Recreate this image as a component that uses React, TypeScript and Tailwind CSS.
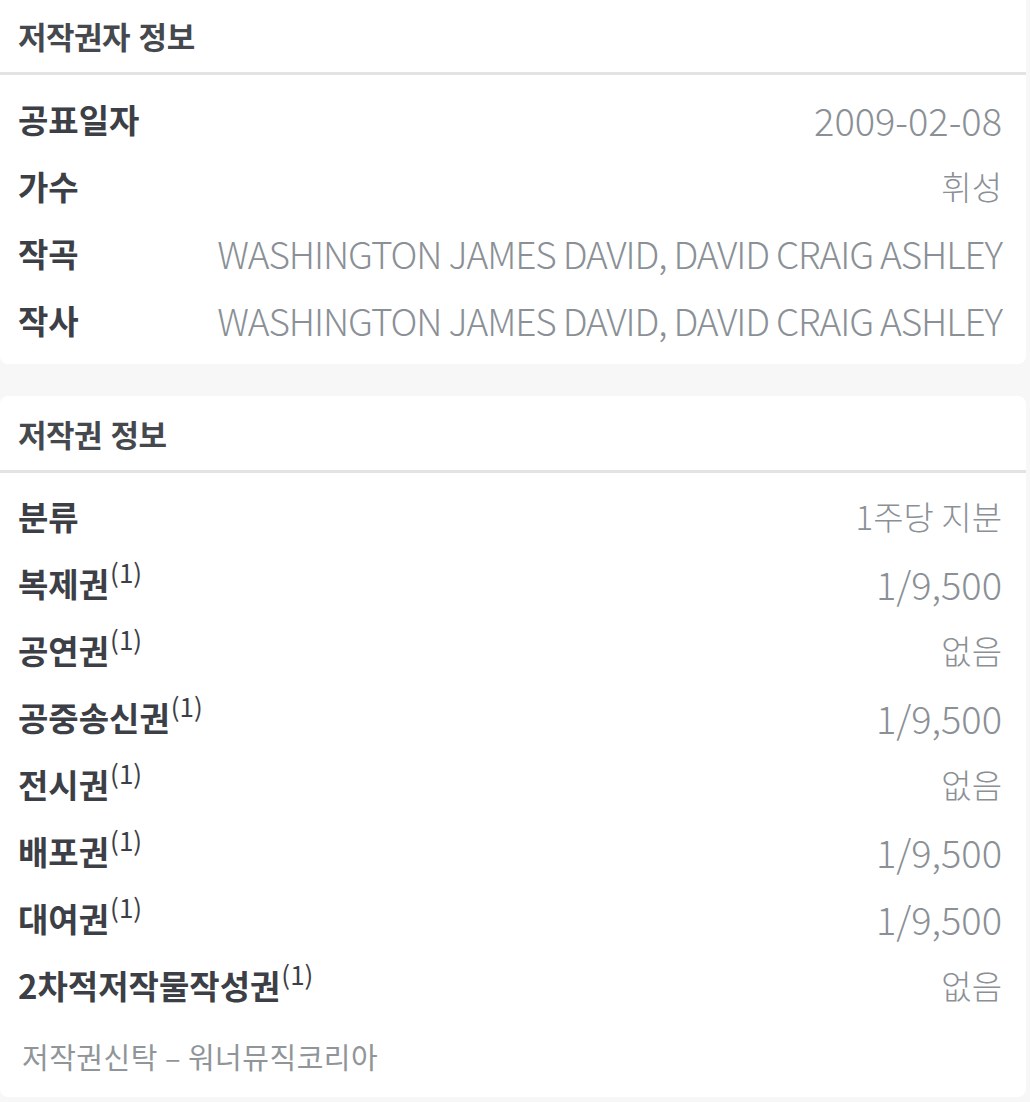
const font = { fontFamily: '"Noto Sans CJK KR", "Noto Sans", sans-serif' };

type Row = { label: string; sup?: boolean; value: string; latin?: boolean };

const authorRows: Row[] = [
  { label: "공표일자", value: "2009-02-08", latin: true },
  { label: "가수", value: "휘성" },
  { label: "작곡", value: "WASHINGTON JAMES DAVID, DAVID CRAIG ASHLEY", latin: true },
  { label: "작사", value: "WASHINGTON JAMES DAVID, DAVID CRAIG ASHLEY", latin: true },
];

const rightRows: Row[] = [
  { label: "분류", value: "1주당 지분" },
  { label: "복제권", sup: true, value: "1/9,500", latin: true },
  { label: "공연권", sup: true, value: "없음" },
  { label: "공중송신권", sup: true, value: "1/9,500", latin: true },
  { label: "전시권", sup: true, value: "없음" },
  { label: "배포권", sup: true, value: "1/9,500", latin: true },
  { label: "대여권", sup: true, value: "1/9,500", latin: true },
  { label: "2차적저작물작성권", sup: true, value: "없음" },
];

const InfoRow = ({ label, sup, value, latin }: Row) => {
  const long = value.length > 20;
  return (
    <div className="flex h-[67px] items-center justify-between pl-[18px] pr-[24px]">
      <div className="flex items-start text-[33px] font-bold leading-none text-[#3c4046]">
        {label}
        {sup && <span className="-mt-[8px] ml-[1px] text-[26px] font-normal">(1)</span>}
      </div>
      <div
        className={
          latin
            ? long
              ? "text-[37px] font-light leading-none tracking-[-1.1px] text-[#8a9096]"
              : "text-[38px] font-light leading-none text-[#8a9096]"
            : "text-[33px] font-light leading-none text-[#8a9096]"
        }
      >
        {value}
      </div>
    </div>
  );
};

export default function App() {
  return (
    <div style={font} className="flex min-h-[1102px] w-[1030px] flex-col gap-[32px] bg-[#f7f7f7]">
      {/* 저작권자 정보 */}
      <div className="-mt-[2px] w-[1026px] rounded-b-lg bg-white pb-[10px]">
        <div className="flex h-[77px] items-center border-b-[3px] border-[#e1e3e5] pl-[18px]">
          <h2 className="text-[31px] font-bold leading-none tracking-[-0.5px] text-[#45494e] [word-spacing:2px]">
            저작권자 정보
          </h2>
        </div>
        <div className="pt-[11px]">
          {authorRows.map((r, i) => (
            <InfoRow key={i} {...r} />
          ))}
        </div>
      </div>

      {/* 저작권 정보 */}
      <div className="w-[1026px] rounded-lg bg-white pb-[4px]">
        <div className="flex h-[77px] items-center border-b-[3px] border-[#e1e3e5] pl-[18px]">
          <h2 className="text-[31px] font-bold leading-none tracking-[-0.5px] text-[#45494e] [word-spacing:2px]">
            저작권 정보
          </h2>
        </div>
        <div className="pt-[10px]">
          {rightRows.map((r, i) => (
            <InfoRow key={i} {...r} />
          ))}
        </div>
        <div className="flex h-[74px] items-center pl-[22px] text-[29px] leading-none tracking-[0.5px] text-[#909599]">
          저작권신탁 – 워너뮤직코리아
        </div>
      </div>
    </div>
  );
}
